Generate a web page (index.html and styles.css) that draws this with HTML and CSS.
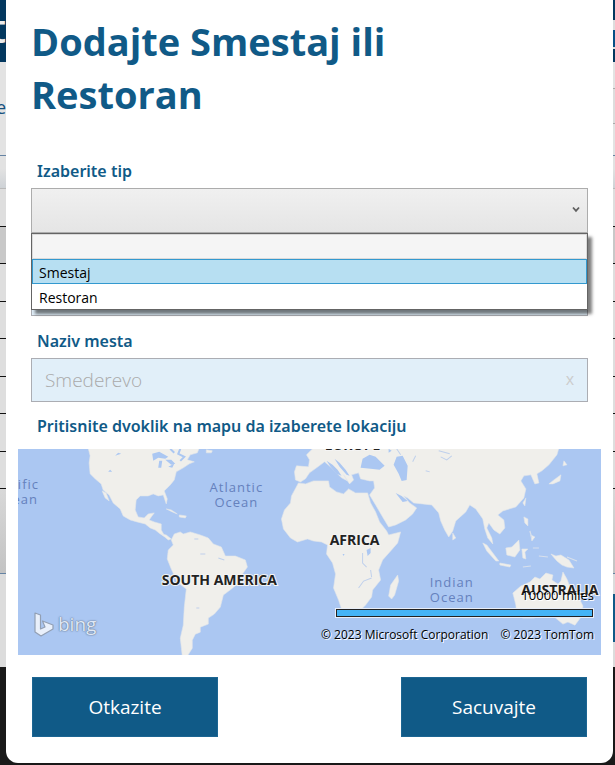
FILE: index.html
```html
<!DOCTYPE html>
<html lang="sr-Latn">
<head>
<meta charset="utf-8">
<meta name="viewport" content="width=device-width, initial-scale=1">
<title>Dodajte Smestaj ili Restoran</title>
<link rel="stylesheet" href="styles.css">
</head>
<body>
<div class="window">
  <div class="backdrop" aria-hidden="true">
    <div class="side side-left">
      <div class="top-bar"><span>t</span></div>
      <div class="heading-area"><span>e</span></div>
      <div class="table-head"></div>
      <div class="row first"></div>
      <div class="row selected"></div>
      <div class="row"></div><div class="row"></div><div class="row"></div>
      <div class="row"></div><div class="row"></div><div class="row"></div>
      <div class="table-rest"></div>
      <div class="actions"></div>
      <div class="footer"></div>
    </div>
    <div class="side side-right">
      <div class="top-bar menu"></div>
      <div class="heading-area search"></div>
      <div class="table-head"></div>
      <div class="row first"></div>
      <div class="row selected"></div>
      <div class="row"></div><div class="row"></div><div class="row"></div>
      <div class="row"></div><div class="row"></div><div class="row"></div>
      <div class="table-rest"></div>
      <div class="actions"><i class="action"></i></div>
      <div class="footer"></div>
    </div>
  </div>

  <main class="dialog">
    <form class="form">
      <h1>Dodajte Smestaj ili Restoran</h1>

      <div class="field">
        <label for="tip">Izaberite tip</label>
        <div class="combo">
          <select id="tip" class="box">
            <option selected></option>
            <option>Smestaj</option>
            <option>Restoran</option>
          </select>
          <svg class="chevron" viewBox="0 0 8 7" aria-hidden="true"><path d="M1 1.5 4 4.8 7 1.5" fill="none" stroke="#606060" stroke-width="1.8"/></svg>
          <ul class="options" role="listbox" aria-label="Izaberite tip">
            <li role="option" class="blank"></li>
            <li role="option" class="active" aria-selected="true">Smestaj</li>
            <li role="option">Restoran</li>
          </ul>
        </div>
      </div>

      <div class="field covered">
        <input id="naziv" class="box" type="text" aria-label="Naziv">
      </div>

      <div class="field">
        <label for="mesto">Naziv mesta</label>
        <div class="box place">
          <input id="mesto" type="text" placeholder="Smederevo">
          <button type="button" class="clear">x</button>
        </div>
      </div>

      <p class="hint">Pritisnite dvoklik na mapu da izaberete lokaciju</p>
    </form>

    <div class="map">
      <svg class="world" viewBox="18 449 582 206" preserveAspectRatio="xMidYMid slice" role="img" aria-label="Mapa sveta">
        <rect x="-600" y="449" width="1900" height="206" fill="#abc7f2"/>
        <g fill="#f0efeb" stroke="#e3e6ea" stroke-width=".6" stroke-linejoin="round">
          <!-- North and Central America -->
          <path d="M88 448 90 456 89 463 90 474 95 479 101 484 103 490 109 495 113 503 120 509 123 516 130 520 137 522 145 524 150 528 155 530 160 534 165 537 161 530 161 524 154 522 149 520 151 517 154 513 148 514 144 518 138 517 135 510 136 500 140 496 148 496 153 494 158 496 163 495 166 504 167 499 164 491 170 485 174 480 176 472 183 468 189 464 194 462 187 460 190 455 197 453 199 448Z"/>
          <path d="M102 491 106 493 109 501 105 498ZM166 509 171 510 177 514 172 512ZM179 515 186 516 185 518 179 517ZM206 450 212 451 211 453 206 453Z"/>
          <!-- South America -->
          <path d="M171 540 174 534 180 532 183 534 190 532 200 535 208 538 213 544 221 547 225 556 235 556 245 560 247 567 240 577 237 584 231 589 223 595 220 607 214 614 208 618 208 624 200 627 200 632 195 634 192 640 192 648 187 656 182 656 180 638 183 625 184 607 186 589 177 582 171 569 167 559 168 550 173 545ZM161 534 166 535 171 539 168 540Z"/>
          <!-- Africa and Madagascar -->
          <path d="M298 483 305 484 313 481 328 481 329 487 336 492 343 494 348 489 355 493 367 493 370 503 375 512 379 522 386 531 388 535 400 532 397 543 390 551 382 560 378 570 380 580 372 590 371 597 365 605 360 610 350 611 342 612 338 600 333 588 335 574 332 563 326 554 327 545 321 542 313 541 307 539 297 542 290 538 283 529 281 519 284 510 290 503 291 496Z"/>
          <path d="M397 575 398 581 394 595 391 599 388 596 390 585Z"/>
          <!-- Europe, Asia and Arabia -->
          <path d="M313 448 306 455 309 460 308 467 296 466 294 472 295 480 300 482 305 479 309 473 316 468 324 462 330 467 341 478 347 481 343 475 349 484 353 480 351 475 358 473 360 479 369 481 373 481 374 488 369 495 375 505 382 517 388 527 395 525 405 520 412 514 416 508 409 503 403 496 407 498 413 503 431 505 438 513 440 521 444 530 448 537 452 531 455 521 465 512 469 505 475 509 482 519 484 529 487 538 492 544 491 538 486 528 488 523 493 530 499 534 504 528 503 520 497 515 502 511 515 507 523 498 525 489 520 481 523 476 530 475 534 484 538 483 536 474 541 471 548 465 556 455 558 448Z"/>
          <!-- Islands of Asia -->
          <path d="M563 461 566 465 562 466ZM560 475 559 481 552 484 548 484 553 480ZM452 533 455 538 452 540ZM482 543 486 545 498 561 495 561 486 551ZM499 563 510 565 509 567 499 565ZM505 548 511 547 518 540 519 550 514 557 506 555ZM521 549 527 549 524 552 525 559 522 558ZM550 554 555 556 560 555 568 560 573 568 566 567 561 565 556 561ZM523 517 527 519 527 526 524 523ZM530 535 534 537 531 541ZM522 503 525 498 524 506Z"/>
          <!-- Australia -->
          <path d="M512 593 520 586 529 582 534 577 539 579 545 573 552 575 551 580 557 584 560 581 562 572 566 579 569 587 577 596 582 606 580 617 574 625 567 622 562 624 556 619 550 614 542 614 533 618 522 618 516 615 515 605Z"/>
        </g>
        <g fill="#abc7f2">
          <!-- Inland seas and lakes -->
          <path d="M152 454 159 452 168 457 165 459 158 458 153 461ZM159 461 162 461 161 468 158 468ZM165 460 171 460 175 464 171 465ZM168 467 174 464 172 468Z"/>
          <path d="M360 468 362 459 369 455 375 457 384 466 379 470 370 469ZM396 457 402 456 407 466 406 480 401 481 398 474 393 465ZM395 493 401 496 407 501 402 502ZM118 453 121 454 115 456ZM110 470 112 472 108 472ZM342 554 344 554 343 556Z"/>
          <path d="M326 461 332 465 337 470 341 476 336 474 330 467ZM334 459 339 463 345 470 349 476 346 475 339 467ZM366 550 370 548 370 553 367 556ZM388 449 391 451 388 453Z"/>
          <path d="M362 553 362 563 366 567M370 570 371 577M358 588 363 581 371 578M412 462 415 456M425 471 429 472M440 457 446 460 451 456M438 451 449 454M396 449 400 455M200 554 205 554M218 558 224 560M196 608 199 608M194 539 198 539" fill="none" stroke="#bfd0ec" stroke-width="1"/>
          <path d="M180 449 178 454 184 457 180 461M170 449 174 453" fill="none" stroke="#abc7f2" stroke-width="2"/>
        </g>
        <path d="M532 548H538M538 556 547 557M522 567 530 566M566 557 576 561M529 531 531 538" fill="none" stroke="#d8e0ec" stroke-width="1.2"/>
        <g class="ocean">
          <text x="39" y="489" text-anchor="end">Pacific</text><text x="38" y="504" text-anchor="end">Ocean</text>
          <text x="236" y="492">Atlantic</text><text x="236" y="507">Ocean</text>
          <text x="451" y="587">Indian</text><text x="451" y="602">Ocean</text>
        </g>
        <g class="continent">
          <text x="219" y="585">SOUTH AMERICA</text>
          <text x="354" y="545">AFRICA</text>
          <text x="352" y="450">EUROPE</text>
          <text x="559" y="595">AUSTRALIA</text>
        </g>
      </svg>
      <div class="bing">
        <svg viewBox="0 0 20 25" aria-hidden="true"><path d="M1 1 6.500 3V17L11 15 8.500 9 19 13V17L7 24 1 20Z" fill="#e9f0fb" stroke="#929fb3" stroke-width="1.200" stroke-linejoin="round"/></svg>
        <span>bing</span>
      </div>
      <div class="legend">
        <span class="scale">10000 miles</span>
        <i class="scale-bar"></i>
        <div class="credits"><span>© 2023 Microsoft Corporation</span><span>© 2023 TomTom</span></div>
      </div>
    </div>

    <div class="buttons">
      <button type="button">Otkazite</button>
      <button type="button">Sacuvajte</button>
    </div>
  </main>
</div>
</body>
</html>
```
FILE: styles.css
```css
* { box-sizing: border-box; }

body {
  margin: 0;
  background: #191919;
  color: #000;
  font-family: "Open Sans", "Noto Sans", sans-serif;
}

.window { display: grid; min-height: 100vh; }
.backdrop, .dialog { grid-area: 1 / 1; }

/* Page behind the dialog */
.backdrop { display: flex; justify-content: space-between; overflow: hidden; }
.side { display: flex; flex-direction: column; width: 6px; overflow: hidden; box-shadow: inset -1px 0 #a8a8a8; }
.top-bar { height: 62px; background: #03385f; }
.top-bar span {
  display: flex;
  justify-content: flex-end;
  color: #ececec;
  font-size: 40px;
  font-weight: 600;
  line-height: 56px;
}
.menu { background: linear-gradient(#03385f 20px, #ddd 20px 30px, #075086 30px 47px, #ddd 47px 49px, #03385f 49px); }
.heading-area { height: 94px; border-bottom: 1px solid #6583a3; background: #e3e3e3; }
.heading-area span {
  display: flex;
  justify-content: flex-end;
  color: #15507e;
  font-size: 18px;
  line-height: 90px;
}
.search { background: linear-gradient(#e3e3e3 26px, #aaa 26px 27px, #ddd 27px 61px, #aaa 61px 62px, #e3e3e3 62px); }
.table-head { height: 33px; border-bottom: 1px solid #b9b9b9; background: linear-gradient(#e2e2e2 40%, #ced2d6); }
.row { height: 37px; flex: 1 1 37px; max-height: 38px; border-bottom: 1px solid #111; background: #dedede; }
.row.selected { background: #c8c8c8; }
.table-rest { height: 85px; border-bottom: 1px solid #6583a3; background: linear-gradient(#d8d8d8, #c3c3c3); }
.actions { height: 93px; padding-top: 20px; background: #dcdcdc; }
.action { display: block; height: 48px; background: #105a87; }
.footer { height: 98px; background: #191919; }

/* Dialog */
.dialog {
  display: flex;
  flex-direction: column;
  margin: 0 2px 2px 6px;
  padding-bottom: 26px;
  border-radius: 0 0 12px 12px;
  background: #fff;
  z-index: 1;
}
.form { padding: 0 25px; }

h1 {
  margin: 0 0 33px;
  padding: 15px 80px 0 0;
  color: #105a87;
  font-size: 38px;
  font-weight: 700;
  line-height: 53px;
}

.field { margin-bottom: 8px; }
.field > label, .hint {
  display: block;
  margin: 0;
  padding-left: 6px;
  color: #105a87;
  font-family: "Noto Sans", "Open Sans", sans-serif;
  font-size: 16px;
  font-weight: 600;
  line-height: 34px;
}
.box {
  display: block;
  width: 100%;
  height: 44px;
  border: 1px solid #abadb3;
  border-radius: 0;
  background: #e1eff9;
  font: inherit;
}
.covered { padding-top: 31px; }

.combo { position: relative; }
.combo select {
  appearance: none;
  height: 45px;
  border-color: #acacac;
  background: linear-gradient(#f0f0f0, #e5e5e5);
}
.chevron { position: absolute; right: 8px; top: 18px; width: 8px; height: 7px; pointer-events: none; }

.options {
  position: absolute;
  z-index: 2;
  top: 100%;
  left: 0;
  right: 0;
  margin: 0;
  padding: 0;
  border: 1px solid #646464;
  background: #fff;
  box-shadow: 4px 4px 3px rgba(0, 0, 0, .5);
  list-style: none;
}
.options li {
  height: 25px;
  padding: 0 6px;
  border: 1px solid transparent;
  font-size: 14px;
  line-height: 25px;
}
.options .blank { border-color: #dadada; background: #f5f5f5; }
.options .active { border-color: #3399cf; background: #b7dff2; }

.place { display: flex; align-items: center; }
.place input {
  flex: 1;
  min-width: 0;
  padding: 0 13px;
  border: 0;
  background: none;
  font: 300 19px/42px "Open Sans", sans-serif;
}
.place input::placeholder { color: #aaa; opacity: 1; }
.clear {
  padding: 0 13px 2px;
  border: 0;
  background: none;
  color: #ccc;
  font: 16px/20px "Open Sans", sans-serif;
}
.hint { line-height: 32px; }

/* Map */
.map {
  position: relative;
  margin: 7px 12px 0;
  height: 206px;
  overflow: hidden;
  background: #abc7f2;
}
.world { display: block; width: 100%; height: 100%; }
.ocean { fill: #6581bd; font-size: 13px; font-weight: 500; letter-spacing: 1px; text-anchor: middle; }
.continent {
  fill: #222;
  stroke: #f4f4f4;
  stroke-width: 2px;
  paint-order: stroke;
  font-size: 14px;
  font-weight: 700;
  text-anchor: middle;
}
.bing {
  position: absolute;
  left: 16px;
  bottom: 17px;
  display: flex;
  align-items: center;
  gap: 4px;
  color: #dfe8f6;
  font-size: 19px;
  line-height: 28px;
  text-shadow: 0 0 1px #66758d, 0 0 2px #66758d;
}
.bing svg { width: 20px; height: 25px; }
.legend {
  position: absolute;
  right: 7px;
  bottom: 12px;
  display: flex;
  flex-direction: column;
  align-items: flex-end;
  font-size: 12px;
  line-height: 16px;
  text-shadow: 1px 1px #fff;
}
.scale { font-size: 13px; }
.scale-bar {
  width: 257px;
  height: 8px;
  margin: 6px 1px 10px 0;
  border: 1px solid #222;
  outline: 1px solid #e8eef8;
  background: #44b4f7;
}
.credits { display: flex; gap: 12px; }

.buttons { display: flex; justify-content: space-between; padding: 22px 26px 0; }
.buttons button {
  width: 186px;
  height: 60px;
  border: 1px solid #1c6592;
  background: #105a87;
  color: #fff;
  font: 19px/28px "Open Sans", sans-serif;
}
```
